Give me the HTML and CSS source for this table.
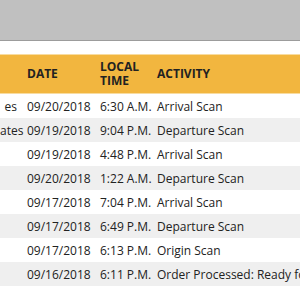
FILE: index.html
```html
<!DOCTYPE html>
<html>
<head>
<meta charset="utf-8">
<link rel="stylesheet" href="styles.css">
</head>
<body>
<div class="topbar"></div>
<div class="table">
  <div class="row head">
    <div class="cell loc"></div>
    <div class="cell">DATE</div>
    <div class="cell">LOCAL<br>TIME</div>
    <div class="cell">ACTIVITY</div>
  </div>
  <div class="row">
    <div class="cell loc">es</div>
    <div class="cell">09/20/2018</div>
    <div class="cell">6:30 A.M.</div>
    <div class="cell">Arrival Scan</div>
  </div>
  <div class="row alt">
    <div class="cell loc">ates</div>
    <div class="cell">09/19/2018</div>
    <div class="cell">9:04 P.M.</div>
    <div class="cell">Departure Scan</div>
  </div>
  <div class="row">
    <div class="cell loc"></div>
    <div class="cell">09/19/2018</div>
    <div class="cell">4:48 P.M.</div>
    <div class="cell">Arrival Scan</div>
  </div>
  <div class="row alt">
    <div class="cell loc"></div>
    <div class="cell">09/20/2018</div>
    <div class="cell">1:22 A.M.</div>
    <div class="cell">Departure Scan</div>
  </div>
  <div class="row">
    <div class="cell loc"></div>
    <div class="cell">09/17/2018</div>
    <div class="cell">7:04 P.M.</div>
    <div class="cell">Arrival Scan</div>
  </div>
  <div class="row alt">
    <div class="cell loc"></div>
    <div class="cell">09/17/2018</div>
    <div class="cell">6:49 P.M.</div>
    <div class="cell">Departure Scan</div>
  </div>
  <div class="row">
    <div class="cell loc"></div>
    <div class="cell">09/17/2018</div>
    <div class="cell">6:13 P.M.</div>
    <div class="cell">Origin Scan</div>
  </div>
  <div class="row alt">
    <div class="cell loc"></div>
    <div class="cell">09/16/2018</div>
    <div class="cell">6:11 P.M.</div>
    <div class="cell">Order Processed: Ready for UPS</div>
  </div>
</div>
</body>
</html>
```
FILE: styles.css
```css
html, body {
  margin: 0;
  padding: 0;
  background: #ffffff;
  overflow: hidden;
}
body {
  width: 300px;
  height: 300px;
  font-family: "Open Sans", "Noto Sans", sans-serif;
  font-size: 12px;
  color: #222222;
}
.topbar {
  height: 40px;
  background: #c0c0c0;
  border-bottom: 1px solid #9c9c9c;
}
.table {
  margin-top: 13px;
}
.row {
  display: grid;
  grid-template-columns: 22px 73px 57px 1fr;
  height: 24px;
  align-items: center;
  white-space: nowrap;
}
.row.alt {
  background: #efefef;
}
.row.head {
  height: 38px;
  background: #f2b63f;
  border-top: 1px solid #f8dca0;
  border-bottom: 1px solid #f8dca0;
  font-weight: 700;
  line-height: 14px;
}
.cell {
  padding: 0 5px;
}
.cell.loc {
  padding: 0 5px 0 0;
  text-align: right;
}
```
